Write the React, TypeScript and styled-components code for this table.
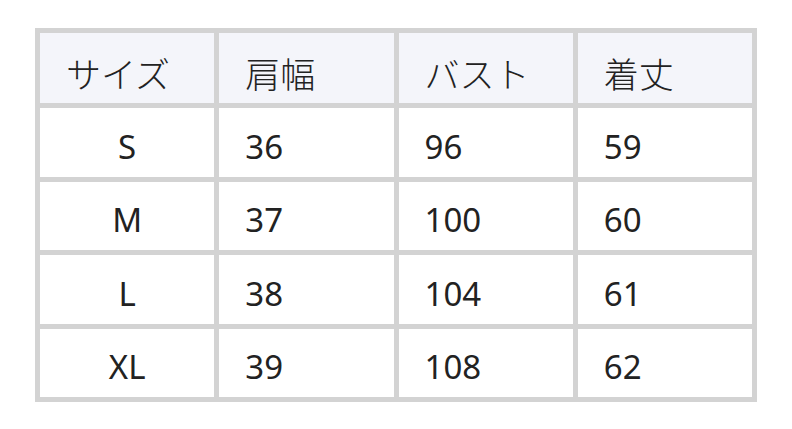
import React from 'react';
import styled, { createGlobalStyle } from 'styled-components';

const GlobalStyle = createGlobalStyle`
  html, body {
    margin: 0;
    padding: 0;
    background: #ffffff;
  }
  body {
    font-family: "Noto Sans", "Noto Sans CJK JP", sans-serif;
    color: #222222;
  }
`;

const Page = styled.div`
  width: 792px;
  height: 429px;
  padding: 28px 0 0 35px;
  box-sizing: border-box;
`;

const SizeTable = styled.table`
  width: 722px;
  height: 374px;
  border-collapse: separate;
  border-spacing: 5px;
  background: #d3d3d3;
  table-layout: fixed;
`;

const HeadCell = styled.th`
  background: #f4f5fa;
  text-align: left;
  font-weight: 300;
  font-size: 35px;
  line-height: 1.2;
  padding: 13px 0 0 26px;
  height: 70px;
  box-sizing: border-box;
  vertical-align: middle;
  color: #222222;
`;

const Cell = styled.td<{ $center?: boolean }>`
  background: #ffffff;
  text-align: ${p => (p.$center ? 'center' : 'left')};
  font-size: 33px;
  line-height: 1.2;
  padding: ${p => (p.$center ? '9px 0 0 0' : '9px 0 0 26px')};
  box-sizing: border-box;
  vertical-align: middle;
  color: #222222;
`;

const headers = ['サイズ', '肩幅', 'バスト', '着丈'];

const rows = [
  ['S', '36', '96', '59'],
  ['M', '37', '100', '60'],
  ['L', '38', '104', '61'],
  ['XL', '39', '108', '62'],
];

const App: React.FC = () => {
  return (
    <>
      <GlobalStyle />
      <Page>
        <SizeTable>
          <thead>
            <tr>
              {headers.map(h => (
                <HeadCell key={h}>{h}</HeadCell>
              ))}
            </tr>
          </thead>
          <tbody>
            {rows.map(r => (
              <tr key={r[0]}>
                {r.map((v, i) => (
                  <Cell key={i} $center={i === 0}>
                    {v}
                  </Cell>
                ))}
              </tr>
            ))}
          </tbody>
        </SizeTable>
      </Page>
    </>
  );
};

export default App;
